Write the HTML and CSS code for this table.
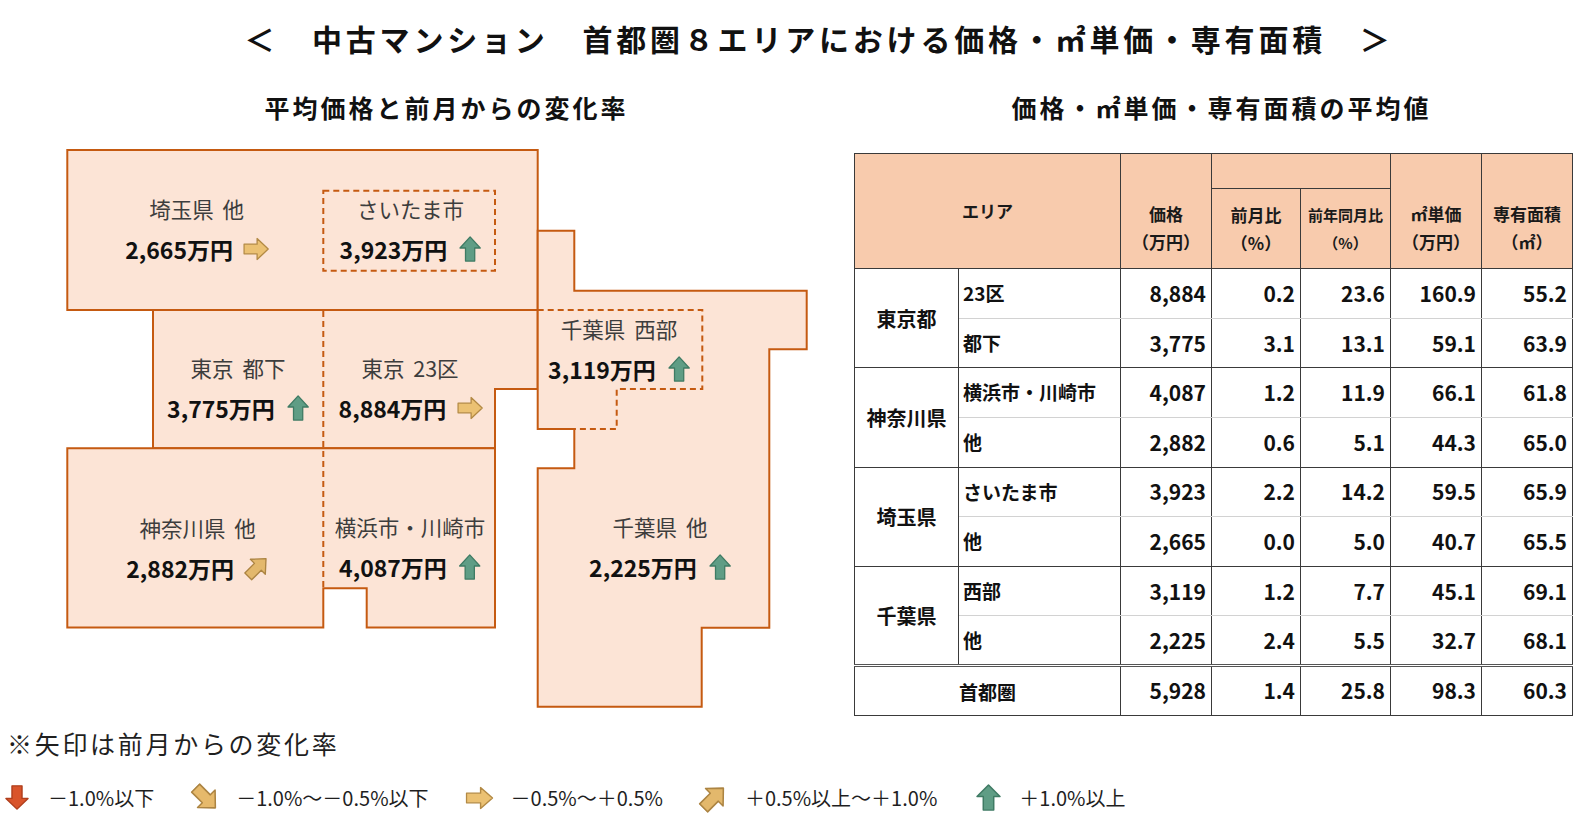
FILE: index.html
```html
<!DOCTYPE html>
<html lang="ja">
<head>
<meta charset="utf-8">
<title>中古マンション 首都圏8エリア</title>
<link rel="stylesheet" href="styles.css">
</head>
<body>
<svg class="defs" width="0" height="0" aria-hidden="true">
  <symbol id="arw" viewBox="0 0 22 26" preserveAspectRatio="none">
    <polygon points="11,0.9 21.1,12 15.6,12 15.6,25.1 6.4,25.1 6.4,12 0.9,12"/>
  </symbol>
</svg>

<h1 class="title">＜　中古マンション　首都圏８エリアにおける価格・㎡単価・専有面積　＞</h1>

<div class="main">
  <section class="col-map">
    <h2 class="sec-title">平均価格と前月からの変化率</h2>
    <div class="map">
      <svg class="shapes" width="820" height="575" viewBox="0 140 820 575">
        <g class="solid">
          <polygon points="67.3,150 537.7,150 537.7,310 67.3,310"/>
          <polygon points="153,310 537.7,310 537.7,389 495,389 495,448.3 153,448.3"/>
          <polygon points="67.3,448.3 495,448.3 495,627.5 366.7,627.5 366.7,588.3 323.3,588.3 323.3,627.5 67.3,627.5"/>
          <polygon points="537.7,230.7 574.3,230.7 574.3,290.7 806.7,290.7 806.7,349.3 769.3,349.3 769.3,627.7 701.7,627.7 701.7,706.7 537.7,706.7 537.7,468.3 574.3,468.3 574.3,429 537.7,429"/>
        </g>
        <g class="dash">
          <rect x="323.3" y="190.7" width="171.7" height="80"/>
          <line x1="323.3" y1="311" x2="323.3" y2="588.3"/>
          <polyline points="537.7,310 702.3,310 702.3,389 616.7,389 616.7,429 574.3,429"/>
        </g>
      </svg>

      <div class="region r-sai-o">
        <div class="name">埼玉県 他</div>
        <div class="price">2,665万円<svg class="ar a-e" viewBox="0 0 22 26" preserveAspectRatio="none"><use href="#arw"/></svg></div>
      </div>
      <div class="region r-sai-c">
        <div class="name">さいたま市</div>
        <div class="price">3,923万円<svg class="ar a-n" viewBox="0 0 22 26" preserveAspectRatio="none"><use href="#arw"/></svg></div>
      </div>
      <div class="region r-tok-t">
        <div class="name">東京 都下</div>
        <div class="price">3,775万円<svg class="ar a-n" viewBox="0 0 22 26" preserveAspectRatio="none"><use href="#arw"/></svg></div>
      </div>
      <div class="region r-tok-23">
        <div class="name">東京 23区</div>
        <div class="price">8,884万円<svg class="ar a-e" viewBox="0 0 22 26" preserveAspectRatio="none"><use href="#arw"/></svg></div>
      </div>
      <div class="region r-chi-w">
        <div class="name">千葉県 西部</div>
        <div class="price">3,119万円<svg class="ar a-n" viewBox="0 0 22 26" preserveAspectRatio="none"><use href="#arw"/></svg></div>
      </div>
      <div class="region r-kan-o">
        <div class="name">神奈川県 他</div>
        <div class="price">2,882万円<svg class="ar a-ne" viewBox="0 0 22 26" preserveAspectRatio="none"><use href="#arw"/></svg></div>
      </div>
      <div class="region r-yoko">
        <div class="name">横浜市・川崎市</div>
        <div class="price">4,087万円<svg class="ar a-n" viewBox="0 0 22 26" preserveAspectRatio="none"><use href="#arw"/></svg></div>
      </div>
      <div class="region r-chi-o">
        <div class="name">千葉県 他</div>
        <div class="price">2,225万円<svg class="ar a-n" viewBox="0 0 22 26" preserveAspectRatio="none"><use href="#arw"/></svg></div>
      </div>
    </div>
  </section>

  <section class="col-table">
    <h2 class="sec-title">価格・㎡単価・専有面積の平均値</h2>
    <table class="data">
      <colgroup>
        <col class="c-grp"><col class="c-sub"><col class="c-n1"><col class="c-n2"><col class="c-n3"><col class="c-n4"><col class="c-n5">
      </colgroup>
      <thead>
        <tr class="h1">
          <th rowspan="2" colspan="2" class="area">エリア</th>
          <th rowspan="2" class="hb">価格<br>（万円）</th>
          <th colspan="2" class="blank"></th>
          <th rowspan="2" class="hb">㎡単価<br>（万円）</th>
          <th rowspan="2" class="hb">専有面積<br>（㎡）</th>
        </tr>
        <tr class="h2">
          <th>前月比<br>（%）</th>
          <th class="small">前年同月比<br>（%）</th>
        </tr>
      </thead>
      <tbody>
        <tr class="g1"><th rowspan="2" class="grp">東京都</th><td class="sub">23区</td><td>8,884</td><td>0.2</td><td>23.6</td><td>160.9</td><td>55.2</td></tr>
        <tr class="g2"><td class="sub">都下</td><td>3,775</td><td>3.1</td><td>13.1</td><td>59.1</td><td>63.9</td></tr>
        <tr class="g1"><th rowspan="2" class="grp">神奈川県</th><td class="sub">横浜市・川崎市</td><td>4,087</td><td>1.2</td><td>11.9</td><td>66.1</td><td>61.8</td></tr>
        <tr class="g2"><td class="sub">他</td><td>2,882</td><td>0.6</td><td>5.1</td><td>44.3</td><td>65.0</td></tr>
        <tr class="g1"><th rowspan="2" class="grp">埼玉県</th><td class="sub">さいたま市</td><td>3,923</td><td>2.2</td><td>14.2</td><td>59.5</td><td>65.9</td></tr>
        <tr class="g2"><td class="sub">他</td><td>2,665</td><td>0.0</td><td>5.0</td><td>40.7</td><td>65.5</td></tr>
        <tr class="g1"><th rowspan="2" class="grp">千葉県</th><td class="sub">西部</td><td>3,119</td><td>1.2</td><td>7.7</td><td>45.1</td><td>69.1</td></tr>
        <tr class="g2"><td class="sub">他</td><td>2,225</td><td>2.4</td><td>5.5</td><td>32.7</td><td>68.1</td></tr>
        <tr class="total"><th colspan="2">首都圏</th><td>5,928</td><td>1.4</td><td>25.8</td><td>98.3</td><td>60.3</td></tr>
      </tbody>
    </table>
  </section>
</div>

<p class="note">※矢印は前月からの変化率</p>

<div class="legend">
  <div class="item"><span class="ico"><svg class="ar a-s lg" viewBox="0 0 22 26" preserveAspectRatio="none"><use href="#arw"/></svg></span><span>－1.0%以下</span></div>
  <div class="item"><span class="ico"><svg class="ar a-se lg" viewBox="0 0 22 26" preserveAspectRatio="none"><use href="#arw"/></svg></span><span>－1.0%～－0.5%以下</span></div>
  <div class="item"><span class="ico"><svg class="ar a-e lg" viewBox="0 0 22 26" preserveAspectRatio="none"><use href="#arw"/></svg></span><span>－0.5%～＋0.5%</span></div>
  <div class="item"><span class="ico"><svg class="ar a-ne lg" viewBox="0 0 22 26" preserveAspectRatio="none"><use href="#arw"/></svg></span><span>＋0.5%以上～＋1.0%</span></div>
  <div class="item"><span class="ico"><svg class="ar a-n lg" viewBox="0 0 22 26" preserveAspectRatio="none"><use href="#arw"/></svg></span><span>＋1.0%以上</span></div>
</div>
</body>
</html>
```

FILE: styles.css
```css
html, body {
  margin: 0;
  padding: 0;
  background: #ffffff;
}
body {
  width: 1588px;
  height: 817px;
  overflow: hidden;
  font-family: "Noto Sans CJK JP", "Noto Sans", "Liberation Sans", sans-serif;
  color: #111111;
}
.defs {
  position: absolute;
  width: 0;
  height: 0;
  overflow: hidden;
}

/* ---------- title ---------- */
.title {
  margin: 17.5px 0 0 0;
  padding-left: 50px;
  height: 40px;
  line-height: 40px;
  font-size: 30px;
  font-weight: 700;
  letter-spacing: 3.8px;
  text-align: center;
  white-space: nowrap;
}

.main {
  display: flex;
  margin-top: 31px;
}

.sec-title {
  margin: 0;
  height: 36px;
  line-height: 36px;
  font-size: 25px;
  font-weight: 700;
  letter-spacing: 3px;
  text-align: center;
  white-space: nowrap;
}

/* ---------- left: map ---------- */
.col-map {
  width: 820px;
  flex: none;
}
.col-map .sec-title {
  padding-left: 73px;
}
.map {
  position: relative;
  width: 820px;
  height: 575px;
  margin-top: 15.5px;
}
.shapes {
  position: absolute;
  left: 0;
  top: 0;
}
.shapes .solid {
  fill: #fce4d6;
  stroke: #c55a11;
  stroke-width: 2;
}
.shapes .dash {
  fill: none;
  stroke: #c55a11;
  stroke-width: 2;
  stroke-dasharray: 6 4;
}

.region {
  position: absolute;
  transform: translate(-50%, -50%);
  display: flex;
  flex-direction: column;
  align-items: center;
  white-space: nowrap;
}
.region .name {
  font-size: 21.5px;
  line-height: 40px;
  color: #3d3d3d;
  word-spacing: 4px;
}
.region .price {
  display: flex;
  align-items: center;
  gap: 12px;
  font-size: 23px;
  font-weight: 700;
  line-height: 40px;
  color: #111111;
}

.r-sai-o  { left: 196.6px; top: 89px; }
.r-sai-c  { left: 410.5px; top: 89px; }
.r-tok-t  { left: 238px;   top: 248.3px; }
.r-tok-23 { left: 410px;   top: 248px; }
.r-chi-w  { left: 619px;   top: 209px; }
.r-kan-o  { left: 197.7px; top: 407.8px; }
.r-yoko   { left: 410px;   top: 406.7px; }
.r-chi-o  { left: 660px;   top: 406.7px; }

/* ---------- arrows ---------- */
.ar {
  width: 22px;
  height: 26px;
  flex: none;
  stroke-width: 1.3;
  stroke-linejoin: round;
  display: block;
  overflow: visible;
}
.ar.a-n {
  width: 22px;
  height: 26px;
  fill: #5f9d85;
  stroke: #3f7b64;
}
.ar.a-e {
  width: 23px;
  height: 26px;
  transform: rotate(90deg);
  fill: #ebc173;
  stroke: #b38a45;
}
.ar.a-ne {
  width: 23px;
  height: 27px;
  transform: rotate(45deg);
  fill: #e3b86c;
  stroke: #ac8442;
}
.ar.a-se {
  width: 27px;
  height: 30px;
  transform: rotate(135deg);
  fill: #e6b96b;
  stroke: #ac8442;
}
.ar.a-s {
  width: 22px;
  height: 22px;
  transform: rotate(180deg);
  fill: #d9542b;
  stroke: #b03f1d;
}
.ar.a-s.lg {
  width: 24px;
  height: 25px;
}
.ar.a-n.lg {
  width: 25px;
  height: 27px;
}
.ar.a-e.lg {
  width: 23px;
  height: 28px;
}
.ar.a-ne.lg {
  width: 27px;
  height: 30px;
}

/* ---------- right: table ---------- */
.col-table {
  width: 718px;
  flex: none;
  margin-left: 34px;
}
.col-table .sec-title {
  padding-left: 17px;
}
.data {
  margin-top: 28.8px;
  width: 718px;
  table-layout: fixed;
  border-collapse: collapse;
  border: 1px solid #3a3a3a;
}
.c-grp { width: 104px; }
.c-sub { width: 162px; }
.c-n1 { width: 91px; }
.c-n2 { width: 89px; }
.c-n3 { width: 90px; }
.c-n4 { width: 91px; }
.c-n5 { width: 91px; }

.data th,
.data td {
  border: 1px solid #3a3a3a;
  padding: 0;
}
.data thead th {
  background: #f8cbad;
  font-size: 17px;
  font-weight: 700;
  line-height: 28px;
  color: #1a1a1a;
  text-align: center;
  white-space: nowrap;
}
.data thead tr.h1 {
  height: 35px;
}
.data thead tr.h2 {
  height: 80px;
}
.data thead th.area {
  vertical-align: middle;
}
.data thead th.hb {
  vertical-align: bottom;
  padding-bottom: 12px;
}
.data thead th.small {
  font-size: 15px;
}

.data tbody tr {
  height: 49.6px;
}
.data tbody tr.g1 td {
  border-bottom-color: #d2d2d2;
}
.data tbody td {
  font-size: 21px;
  font-weight: 700;
  line-height: 1.2;
  text-align: right;
  padding-right: 5px;
  vertical-align: middle;
  color: #111111;
  white-space: nowrap;
}
.data tbody td.sub {
  font-size: 19px;
  text-align: left;
  padding-left: 4px;
  padding-right: 0;
}
.data tbody th.grp {
  font-size: 20px;
  font-weight: 700;
  text-align: center;
  vertical-align: middle;
  white-space: nowrap;
}
.data tbody tr.total {
  height: 50px;
}
.data tbody tr.total th,
.data tbody tr.total td {
  border-top: 3px double #555555;
}
.data tbody tr.total th {
  font-size: 19px;
  font-weight: 700;
  text-align: center;
}

/* ---------- footer ---------- */
.note {
  margin: 9.7px 0 0 0;
  padding-left: 7px;
  line-height: 34px;
  height: 34px;
  font-size: 25px;
  letter-spacing: 2.7px;
  color: #1f1f1f;
  white-space: nowrap;
}
.legend {
  display: flex;
  align-items: center;
  gap: 38px;
  padding-left: 4px;
  margin-top: 24px;
  height: 28px;
  font-size: 20px;
  color: #1f1f1f;
  white-space: nowrap;
}
.legend .item {
  display: flex;
  align-items: center;
}
.legend .ico {
  width: 26px;
  height: 28px;
  display: flex;
  align-items: center;
  justify-content: center;
  margin-right: 18px;
}
```
